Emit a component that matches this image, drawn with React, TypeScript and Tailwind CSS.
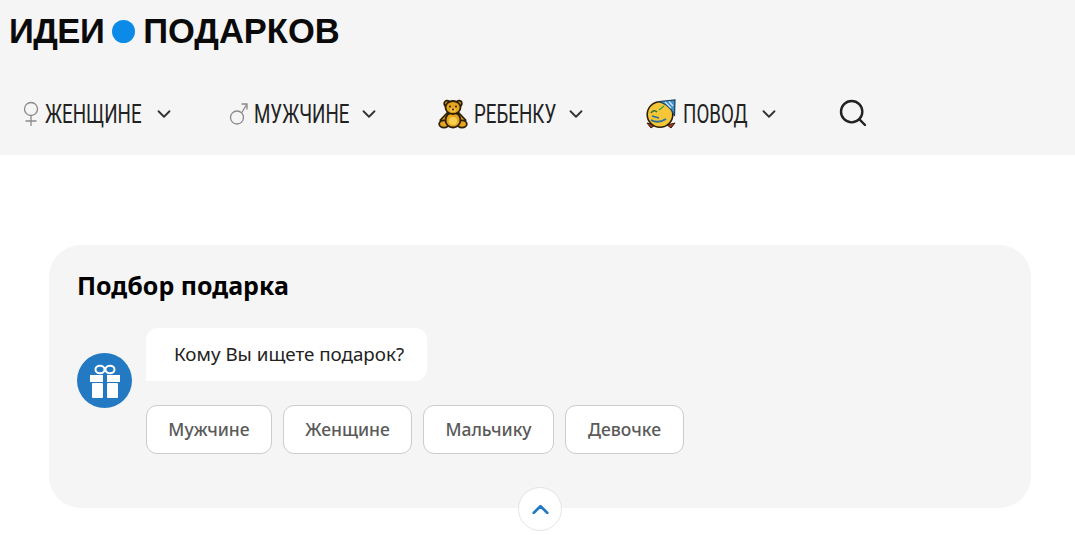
import { ChevronDown, ChevronUp, Search } from "lucide-react";
import { ReactNode } from "react";

const SANS = "font-['Noto_Sans','Open_Sans',sans-serif]";

function Female() {
  return (
    <svg width="18" height="26" viewBox="0 0 18 26" fill="none" stroke="#8a8a8a" strokeWidth="1.3">
      <circle cx="9" cy="8" r="6.5" />
      <path d="M9 14.5 V25 M3.5 20 H14.5" />
    </svg>
  );
}

function Male() {
  return (
    <svg width="20" height="26" viewBox="0 0 20 26" fill="none" stroke="#8a8a8a" strokeWidth="1.3">
      <circle cx="8" cy="16.5" r="6.5" />
      <path d="M12.5 12 L18 3 M12.5 3 H18 V8.5" />
    </svg>
  );
}

function Bear() {
  return (
    <svg width="30" height="30" viewBox="0 0 30 30">
      <g stroke="#2e2004" strokeWidth="1.8" fill="#e6a51e">
        <circle cx="9" cy="4.5" r="2.8" />
        <circle cx="21" cy="4.5" r="2.8" />
        <path d="M10 13 L2.5 21 L6 23 L11 19 Z" />
        <path d="M20 13 L27.5 21 L24 23 L19 19 Z" />
        <ellipse cx="6" cy="25" rx="4.8" ry="3.6" />
        <ellipse cx="24" cy="25" rx="4.8" ry="3.6" />
        <ellipse cx="15" cy="21" rx="7.5" ry="7.5" />
        <ellipse cx="15" cy="8.5" rx="7.5" ry="6.5" />
      </g>
      <ellipse cx="15" cy="22" rx="4.2" ry="4" fill="#f8cf4e" />
      <ellipse cx="15" cy="11" rx="3" ry="2" fill="#f3c04a" />
      <circle cx="12" cy="7.5" r="1" fill="#2e2004" />
      <circle cx="18" cy="7.5" r="1" fill="#2e2004" />
      <circle cx="15" cy="10.5" r="1" fill="#2e2004" />
    </svg>
  );
}

function Party() {
  return (
    <svg width="30" height="30" viewBox="0 0 30 30">
      <path d="M1 24 L5 29 L9 26 Z" fill="#a8322a" stroke="#2e2004" strokeWidth="1" />
      <path d="M29 24 L25 29 L21 26 Z" fill="#a8322a" stroke="#2e2004" strokeWidth="1" />
      <circle cx="14" cy="15.5" r="12.8" fill="#f5c637" stroke="#2e2004" strokeWidth="1.6" />
      <path d="M13 2.5 L29 1 L28.5 17 Q25 7 13 2.5 Z" fill="#3f8fc9" stroke="#1d4060" strokeWidth="1.2" />
      <path d="M19 3 L25 9 M23 2.5 L27 7" stroke="#cfe7f7" strokeWidth="1.3" />
      <path d="M5 14 Q8 10 11 13" stroke="#2f6f3a" strokeWidth="1.5" fill="none" />
      <path d="M13 11 L18 7" stroke="#3aa04a" strokeWidth="1.5" fill="none" />
      <path d="M5 21 Q12 25 20 20 M6 17 L13 19" stroke="#2a6f9f" strokeWidth="1.8" fill="none" />
    </svg>
  );
}

function NavItem({ icon, label, textW, className }: { icon: ReactNode; label: string; textW: string; className: string }) {
  return (
    <div className={`flex items-center ${className}`}>
      {icon}
      <span className={`${textW} text-[25px] leading-none text-[#222] font-['Liberation_Sans_Narrow','Roboto',sans-serif] scale-x-[0.75] origin-left whitespace-nowrap`}>
        {label}
      </span>
      <ChevronDown size={22} strokeWidth={2} className="text-[#333]" />
    </div>
  );
}

function Gift() {
  return (
    <svg width="30" height="34" viewBox="0 0 30 34" fill="#fff">
      <ellipse cx="10" cy="5.5" rx="4.5" ry="3.8" fill="none" stroke="#fff" strokeWidth="2" />
      <ellipse cx="20" cy="5.5" rx="4.5" ry="3.8" fill="none" stroke="#fff" strokeWidth="2" />
      <rect x="0" y="11" width="13" height="7" />
      <rect x="17" y="11" width="13" height="7" />
      <rect x="2" y="19" width="11" height="15" rx="1" />
      <rect x="17" y="19" width="11" height="15" rx="1" />
    </svg>
  );
}

function Option({ label, w }: { label: string; w: string }) {
  return (
    <button className={`h-[49px] ${w} bg-white border border-[#ccc] rounded-[11px] text-[17.5px] font-medium text-[#5a5a5a] ${SANS}`}>
      {label}
    </button>
  );
}

export default function App() {
  return (
    <div className="w-[1075px] h-[535px] overflow-hidden bg-white">
      <header className="h-[155px] bg-[#f5f5f5] pl-[9px]">
        <div className="h-[62px] flex items-center text-[34.5px] font-bold leading-none text-[#0a0a0a] font-['Liberation_Sans',sans-serif]">
          <span className="tracking-[-0.5px]">ИДЕИ</span>
          <span className="w-[23px] h-[23px] rounded-full bg-[#0b8ae8] ml-[8px] mr-[8px]" />
          <span>ПОДАРКОВ</span>
        </div>
        <nav className="h-[76px] mt-[14px] pl-[13px] flex items-center">
          <NavItem
            className="w-[207px]"
            textW="w-[108px]"
            label="ЖЕНЩИНЕ"
            icon={<span className="w-[23px] flex"><Female /></span>}
          />
          <NavItem
            className="w-[209px]"
            textW="w-[104px]"
            label="МУЖЧИНЕ"
            icon={<span className="w-[25px] flex"><Male /></span>}
          />
          <NavItem
            className="w-[208px]"
            textW="w-[91px]"
            label="РЕБЕНКУ"
            icon={<span className="mr-[6px] flex"><Bear /></span>}
          />
          <NavItem
            className="w-[191px]"
            textW="w-[75px]"
            label="ПОВОД"
            icon={<span className="mr-[7px] flex"><Party /></span>}
          />
          <Search size={32} strokeWidth={1.8} className="text-[#222] -mt-[2px]" />
        </nav>
      </header>
      <main className="pt-[90px] pl-[49px]">
        <section className={`relative w-[982px] h-[263px] bg-[#f5f5f5] rounded-[32px] pt-[24px] pl-[28px] ${SANS}`}>
          <h2 className="text-[25px] leading-[32px] font-bold text-black">Подбор подарка</h2>
          <div className="mt-[27px] flex">
            <div className="w-[55px] h-[55px] mt-[25px] rounded-full bg-[#2379c2] flex items-center justify-center">
              <Gift />
            </div>
            <div className="ml-[14px]">
              <div className="w-[281px] h-[53px] bg-white rounded-[12px] rounded-bl-none pl-[28px] flex items-center text-[18.8px] text-[#222]">
                Кому Вы ищете подарок?
              </div>
              <div className="mt-[24px] flex gap-[11px]">
                <Option label="Мужчине" w="w-[126px]" />
                <Option label="Женщине" w="w-[129px]" />
                <Option label="Мальчику" w="w-[131px]" />
                <Option label="Девочке" w="w-[119px]" />
              </div>
            </div>
          </div>
          <div className="absolute left-[469px] top-[242px] w-[44px] h-[44px] rounded-full bg-white border border-[#e5e5e5] flex items-center justify-center">
            <ChevronUp size={27} strokeWidth={2.5} className="text-[#2379c2]" />
          </div>
        </section>
      </main>
    </div>
  );
}
